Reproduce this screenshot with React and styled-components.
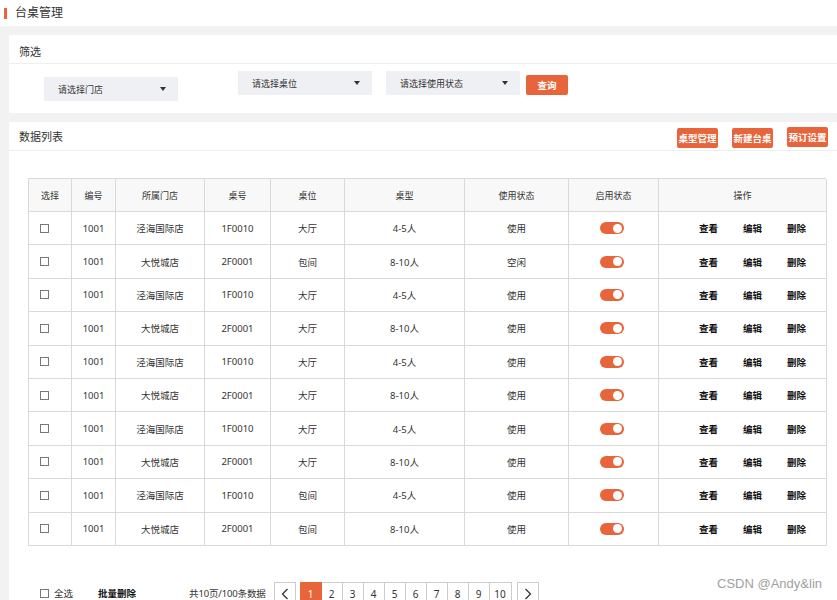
import React from "react";
import styled, { createGlobalStyle } from "styled-components";

const ORANGE = "#e8643a";
const LINE = "#d9d9d9";

const Global = createGlobalStyle`
  html, body { margin: 0; padding: 0; overflow: hidden; background: #f2f2f2; }
  body { font-family: "Noto Sans", "Noto Sans CJK SC", sans-serif; color: #333; }
  * { box-sizing: border-box; }
`;

const Page = styled.div`
  width: 837px;
  height: 600px;
  overflow: hidden;
  position: relative;
  background: #f2f2f2;
`;

const TopBar = styled.header`
  height: 26px;
  background: #fff;
  display: flex;
  align-items: center;
  padding-left: 4px;
`;

const Accent = styled.span`
  width: 3px;
  height: 11px;
  background: ${ORANGE};
  margin-right: 8px;
`;

const PageTitle = styled.h1`
  margin: 0;
  font-size: 12px;
  font-weight: 400;
  color: #333;
  line-height: 1;
`;

const Main = styled.main`
  padding: 9px 0 0 9px;
`;

const Card = styled.section`
  background: #fff;
  margin-bottom: 9px;
`;

const CardHead = styled.div`
  height: 29px;
  border-bottom: 1px solid #eeeeee;
  display: flex;
  align-items: flex-start;
  justify-content: space-between;
  padding: 0 9px 0 10px;
`;

const CardTitle = styled.span`
  font-size: 11px;
  line-height: 14px;
  padding-top: ${(p) => p.$pt}px;
  color: #333;
`;

const FilterBody = styled.div`
  display: flex;
  align-items: flex-start;
  padding: 7px 0 12px 35px;
`;

const Select = styled.div`
  width: 134px;
  height: 24px;
  background: #eff0f4;
  display: flex;
  align-items: center;
  justify-content: space-between;
  padding: 0 12px 0 14px;
  font-size: 9px;
  color: #333;
  margin-top: ${(p) => p.$top || 0}px;
  margin-left: ${(p) => p.$left || 0}px;
`;

const Caret = styled.span`
  width: 0;
  height: 0;
  border-left: 3px solid transparent;
  border-right: 3px solid transparent;
  border-top: 4px solid #333;
`;

const OrangeButton = styled.button`
  width: ${(p) => p.$w || 41}px;
  height: 20px;
  border: none;
  border-radius: 2px;
  background: ${ORANGE};
  color: #fff;
  font-family: "Noto Sans CJK SC", sans-serif;
  font-size: 9.5px;
  font-weight: 700;
  padding: 0;
  margin-top: ${(p) => p.$top || 0}px;
  margin-left: ${(p) => p.$left || 0}px;
  cursor: pointer;
`;

const Actions = styled.div`
  display: flex;
  gap: 14px;
  padding-top: 6px;
`;

const DataCard = styled(Card)`
  height: 600px;
`;

const Table = styled.div`
  margin: 27px 0 0 19px;
  width: 798px;
  border-top: 1px solid ${LINE};
  border-left: 1px solid ${LINE};
`;

const Row = styled.div`
  display: grid;
  grid-template-columns: 43px 44px 89px 66px 74px 120px 104px 90px 168px;
  height: ${(p) => (p.$head ? 33 : 33.4)}px;
  background: ${(p) => (p.$head ? "#f8f8f8" : "#fff")};
  font-size: ${(p) => (p.$head ? 9 : 9.5)}px;
`;

const Cell = styled.div`
  border-right: 1px solid ${LINE};
  border-bottom: 1px solid ${LINE};
  display: flex;
  align-items: center;
  justify-content: ${(p) => (p.$left ? "flex-start" : "center")};
  padding-left: ${(p) => p.$pl || 0}px;
  gap: ${(p) => p.$gap || 0}px;
  color: #333;
  white-space: nowrap;
`;

const Check = styled.span`
  display: inline-block;
  width: 9px;
  height: 9px;
  border: 1px solid #777;
  background: #fff;
`;

const Toggle = styled.span`
  width: 24px;
  height: 12px;
  border-radius: 6px;
  background: ${ORANGE};
  position: relative;
  margin-left: -4px;
  &::after {
    content: "";
    position: absolute;
    right: 1.5px;
    top: 1.5px;
    width: 9px;
    height: 9px;
    border-radius: 50%;
    background: #fff;
  }
`;

const OpLink = styled.span`
  font-weight: 700;
  color: #111;
  font-size: 9.5px;
`;

const Footer = styled.div`
  display: flex;
  align-items: center;
  height: 23px;
  margin-top: 36px;
  padding-left: 31px;
  font-size: 9.5px;
  color: #333;
`;

const SelectAll = styled.label`
  display: flex;
  align-items: center;
  gap: 5px;
`;

const BatchDelete = styled.span`
  margin-left: 25px;
  font-weight: 700;
  color: #111;
`;

const Total = styled.span`
  margin-left: 53px;
  letter-spacing: -0.15px;
`;

const Pager = styled.div`
  display: flex;
  margin-left: 8px;
  align-self: flex-start;
`;

const PageBox = styled.span`
  width: ${(p) => p.$w || 21}px;
  height: 24px;
  border: 1px solid #cccccc;
  margin-left: ${(p) => p.$ml ?? -1}px;
  display: flex;
  align-items: center;
  justify-content: center;
  font-size: 10px;
  background: ${(p) => (p.$active ? ORANGE : "#fff")};
  border-color: ${(p) => (p.$active ? ORANGE : "#cccccc")};
  color: ${(p) => (p.$active ? "#fff" : "#333")};
  position: relative;
  z-index: ${(p) => (p.$active ? 1 : 0)};
`;

const Watermark = styled.div`
  position: absolute;
  right: 15px;
  top: 576px;
  font-family: "Liberation Sans", Arial, sans-serif;
  font-size: 13px;
  color: #a0a0a0;
`;

const headers = ["选择", "编号", "所属门店", "桌号", "桌位", "桌型", "使用状态", "启用状态", "操作"];

const rows = [
  ["泾海国际店", "1F0010", "大厅", "4-5人", "使用"],
  ["大悦城店", "2F0001", "包间", "8-10人", "空闲"],
  ["泾海国际店", "1F0010", "大厅", "4-5人", "使用"],
  ["大悦城店", "2F0001", "大厅", "8-10人", "使用"],
  ["泾海国际店", "1F0010", "大厅", "4-5人", "使用"],
  ["大悦城店", "2F0001", "大厅", "8-10人", "使用"],
  ["泾海国际店", "1F0010", "大厅", "4-5人", "使用"],
  ["大悦城店", "2F0001", "大厅", "8-10人", "使用"],
  ["泾海国际店", "1F0010", "包间", "4-5人", "使用"],
  ["大悦城店", "2F0001", "包间", "8-10人", "使用"],
];

const Chevron = ({ dir }) => (
  <svg width="8" height="12" viewBox="0 0 8 12">
    <path
      d={dir === "left" ? "M6.5 1 L1.5 6 L6.5 11" : "M1.5 1 L6.5 6 L1.5 11"}
      fill="none"
      stroke="#333"
      strokeWidth="1.3"
    />
  </svg>
);

export default function App() {
  return (
    <Page>
      <Global />
      <TopBar>
        <Accent />
        <PageTitle>台桌管理</PageTitle>
      </TopBar>
      <Main>
        <Card>
          <CardHead>
            <CardTitle $pt={10}>筛选</CardTitle>
          </CardHead>
          <FilterBody>
            <Select $top={6}>
              请选择门店
              <Caret />
            </Select>
            <Select $left={60}>
              请选择桌位
              <Caret />
            </Select>
            <Select $left={14}>
              请选择使用状态
              <Caret />
            </Select>
            <OrangeButton $w={42} $top={4} $left={6}>
              查询
            </OrangeButton>
          </FilterBody>
        </Card>
        <DataCard>
          <CardHead>
            <CardTitle $pt={8}>数据列表</CardTitle>
            <Actions>
              <OrangeButton>桌型管理</OrangeButton>
              <OrangeButton>新建台桌</OrangeButton>
              <OrangeButton $top={-1}>预订设置</OrangeButton>
            </Actions>
          </CardHead>
          <Table>
            <Row $head>
              {headers.map((h) => (
                <Cell key={h}>{h}</Cell>
              ))}
            </Row>
            {rows.map((r, i) => (
              <Row key={i}>
                <Cell $left $pl={11}>
                  <Check />
                </Cell>
                <Cell>1001</Cell>
                {r.map((v, j) => (
                  <Cell key={j}>{v}</Cell>
                ))}
                <Cell>
                  <Toggle />
                </Cell>
                <Cell $left $pl={40} $gap={25}>
                  <OpLink>查看</OpLink>
                  <OpLink>编辑</OpLink>
                  <OpLink>删除</OpLink>
                </Cell>
              </Row>
            ))}
          </Table>
          <Footer>
            <SelectAll>
              <Check />
              全选
            </SelectAll>
            <BatchDelete>批量删除</BatchDelete>
            <Total>共10页/100条数据</Total>
            <Pager>
              <PageBox $w={22} $ml={0}>
                <Chevron dir="left" />
              </PageBox>
              <PageBox $w={22} $ml={4} $active>
                1
              </PageBox>
              {[2, 3, 4, 5, 6, 7, 8, 9, 10].map((n) => (
                <PageBox key={n} $w={n === 10 ? 23 : 22}>
                  {n}
                </PageBox>
              ))}
              <PageBox $w={22} $ml={5}>
                <Chevron dir="right" />
              </PageBox>
            </Pager>
          </Footer>
        </DataCard>
      </Main>
      <Watermark>CSDN @Andy&amp;lin</Watermark>
    </Page>
  );
}
